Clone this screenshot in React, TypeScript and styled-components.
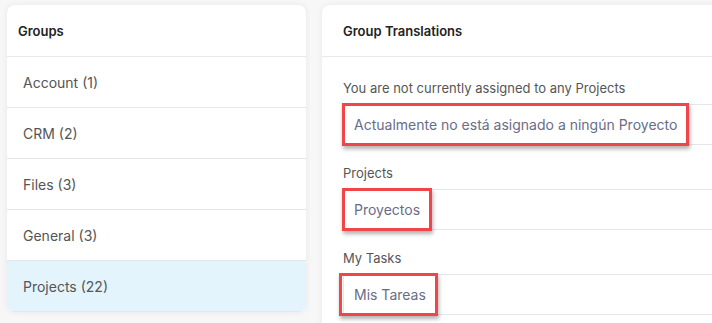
import styled, { createGlobalStyle } from "styled-components";

const GlobalStyle = createGlobalStyle`
  body {
    margin: 0;
    background: #f7f7f8;
    font-family: Inter, "Noto Sans", sans-serif;
    overflow: hidden;
  }
`;

const Page = styled.div`
  display: flex;
  align-items: flex-start;
  gap: 16px;
  padding: 5px 0 0 7px;
  width: 100vw;
  height: 100vh;
  box-sizing: border-box;
  overflow: hidden;
`;

const Card = styled.section<{ $width: number }>`
  width: ${(props) => props.$width}px;
  flex-shrink: 0;
  background: #fff;
  border-radius: 8px;
  box-shadow: 0 0 6px rgba(0, 0, 0, 0.07);
  overflow: hidden;
`;

const CardHeader = styled.header<{ $pad: number }>`
  height: 51px;
  display: flex;
  align-items: center;
  padding-left: ${(props) => props.$pad}px;
  border-bottom: 1px solid #e9e9ec;
  font-size: 13px;
  font-weight: 600;
  color: #222;
`;

const GroupList = styled.ul`
  list-style: none;
  margin: 0;
  padding: 0;
`;

const GroupItem = styled.li<{ $active?: boolean }>`
  height: 50px;
  display: flex;
  align-items: center;
  padding-left: 16px;
  border-bottom: 1px solid #e6e6e9;
  font-size: 14px;
  color: #555;
  background: ${(props) => (props.$active ? "#e3f4fd" : "#fff")};
`;

const CardBody = styled.div`
  padding: 23px 0 0 21px;
`;

const Field = styled.div`
  margin-bottom: 20px;
`;

const Label = styled.div`
  height: 16px;
  line-height: 16px;
  font-size: 13px;
  color: #555;
  margin-bottom: 8px;
`;

const InputBox = styled.div`
  height: 39px;
  display: flex;
  align-items: center;
  padding-left: 10px;
  border: 1px solid #e4e6ee;
  border-right: none;
  border-radius: 3px 0 0 3px;
  font-size: 14px;
  color: #6a6c87;
`;

// red annotation frame drawn over the translated value
const Marked = styled.span<{ $shiftX?: number }>`
  position: relative;
  line-height: 17px;
  &::after {
    content: "";
    position: absolute;
    top: -13px;
    bottom: -13px;
    left: ${(props) => -12 - (props.$shiftX ?? 0)}px;
    right: -12px;
    border: 3px solid #f04549;
    box-shadow: 1px 3px 4px rgba(0, 0, 0, 0.3);
  }
`;

const groups = [
  { name: "Account", count: 1 },
  { name: "CRM", count: 2 },
  { name: "Files", count: 3 },
  { name: "General", count: 3 },
  { name: "Projects", count: 22 },
];

const translations = [
  {
    key: "You are not currently assigned to any Projects",
    value: "Actualmente no está asignado a ningún Proyecto",
    shift: 0,
  },
  { key: "Projects", value: "Proyectos", shift: 0 },
  { key: "My Tasks", value: "Mis Tareas", shift: 3 },
];

const App = () => {
  return (
    <>
      <GlobalStyle />
      <Page>
        <Card $width={299}>
          <CardHeader $pad={11}>Groups</CardHeader>
          <GroupList>
            {groups.map((g) => (
              <GroupItem key={g.name} $active={g.name === "Projects"}>
                {g.name} ({g.count})
              </GroupItem>
            ))}
          </GroupList>
        </Card>
        <Card $width={440}>
          <CardHeader $pad={21}>Group Translations</CardHeader>
          <CardBody>
            {translations.map((t) => (
              <Field key={t.key}>
                <Label>{t.key}</Label>
                <InputBox>
                  <Marked $shiftX={t.shift}>{t.value}</Marked>
                </InputBox>
              </Field>
            ))}
          </CardBody>
        </Card>
      </Page>
    </>
  );
};

export default App;
